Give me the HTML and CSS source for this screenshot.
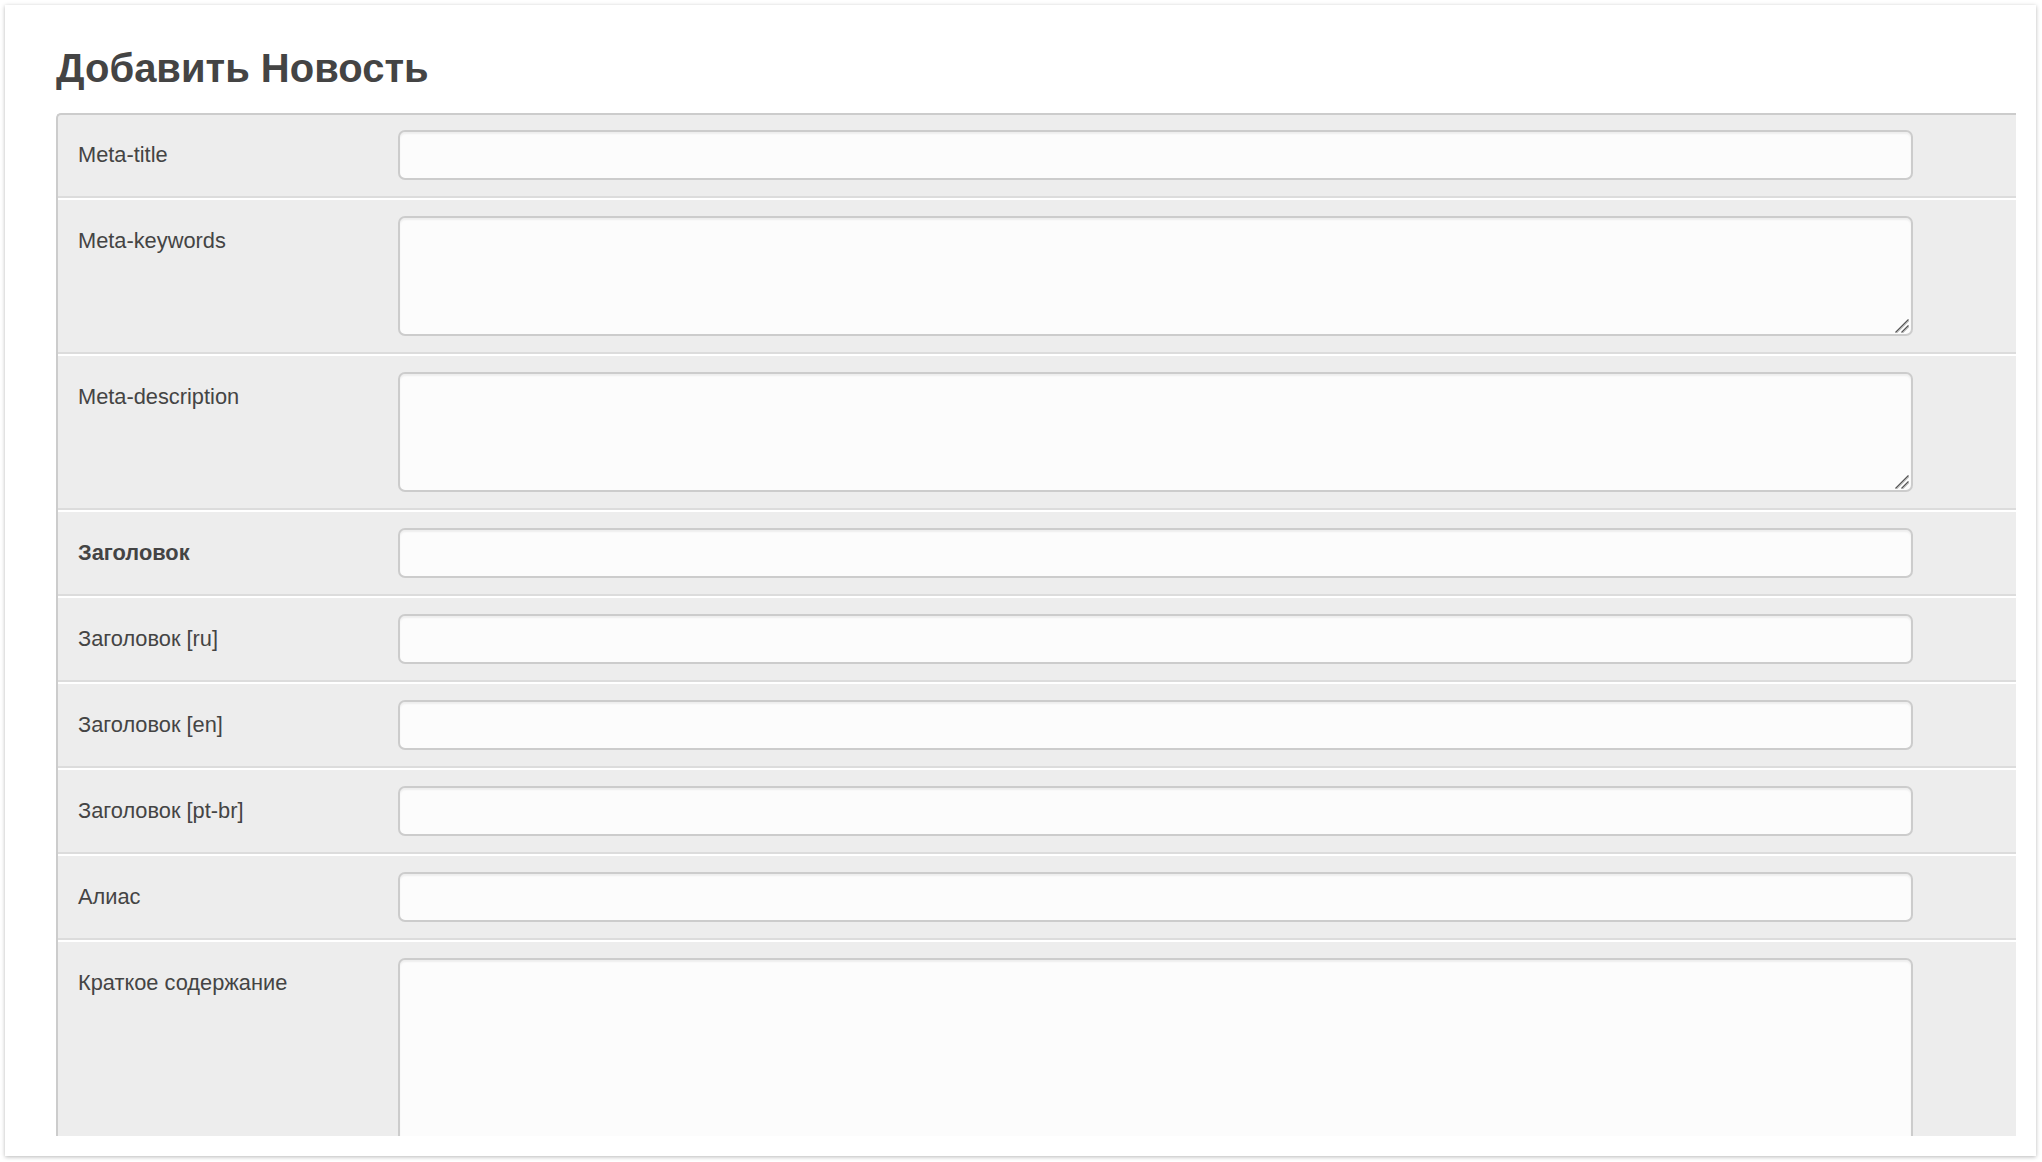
FILE: index.html
```html
<!DOCTYPE html>
<html lang="ru">
<head>
<meta charset="utf-8">
<title>Добавить Новость</title>
<link rel="stylesheet" href="styles.css">
</head>
<body>
<div class="card">
  <h1 class="page-title">Добавить Новость</h1>
  <div class="scroll">
    <div class="panel">
      <div class="row">
        <label class="label">Meta-title</label>
        <div class="control"><input class="field" type="text"></div>
      </div>
      <div class="row">
        <label class="label">Meta-keywords</label>
        <div class="control">
          <textarea class="field area"></textarea>
          <svg class="grip" width="16" height="16" viewBox="0 0 16 16"><path d="M14.5 1.5 L1.5 14.5 M14.5 7.5 L7.5 14.5" stroke="#555" stroke-width="1.4" fill="none"/><path d="M15 3 L3 15 M15 9 L9 15" stroke="#bbb" stroke-width="0.8" fill="none"/></svg>
        </div>
      </div>
      <div class="row">
        <label class="label">Meta-description</label>
        <div class="control">
          <textarea class="field area"></textarea>
          <svg class="grip" width="16" height="16" viewBox="0 0 16 16"><path d="M14.5 1.5 L1.5 14.5 M14.5 7.5 L7.5 14.5" stroke="#555" stroke-width="1.4" fill="none"/><path d="M15 3 L3 15 M15 9 L9 15" stroke="#bbb" stroke-width="0.8" fill="none"/></svg>
        </div>
      </div>
      <div class="row">
        <label class="label label-strong">Заголовок</label>
        <div class="control"><input class="field" type="text"></div>
      </div>
      <div class="row">
        <label class="label">Заголовок [ru]</label>
        <div class="control"><input class="field" type="text"></div>
      </div>
      <div class="row">
        <label class="label">Заголовок [en]</label>
        <div class="control"><input class="field" type="text"></div>
      </div>
      <div class="row">
        <label class="label">Заголовок [pt-br]</label>
        <div class="control"><input class="field" type="text"></div>
      </div>
      <div class="row">
        <label class="label">Алиас</label>
        <div class="control"><input class="field" type="text"></div>
      </div>
      <div class="row">
        <label class="label">Краткое содержание</label>
        <div class="control"><textarea class="field area area-big"></textarea></div>
      </div>
    </div>
  </div>
</div>
</body>
</html>
```
FILE: styles.css
```css
html, body {
  margin: 0;
  padding: 0;
  background: #ffffff;
}

body {
  font-family: "Liberation Sans", Arial, sans-serif;
  color: #444444;
}

.card {
  box-sizing: border-box;
  margin: 5px;
  width: 2031px;
  height: 1151px;
  padding: 40px 20px 20px 51px;
  background: #ffffff;
  box-shadow: 0 1px 4px rgba(0, 0, 0, 0.28);
  display: flex;
  flex-direction: column;
}

.page-title {
  margin: 0 0 22px 0;
  font-size: 40px;
  line-height: 46px;
  font-weight: bold;
  color: #444444;
}

.scroll {
  flex: 1;
  min-height: 0;
  overflow: hidden;
}

.panel {
  background: #ededed;
  border-top: 2px solid #cccccc;
  border-left: 2px solid #cccccc;
  border-top-left-radius: 5px;
}

.row {
  display: grid;
  grid-template-columns: 340px 1515px;
  align-items: start;
  padding: 16px 0 16px 0;
  border-bottom: 2px solid #dcdcdc;
}

.row + .row {
  border-top: 2px solid #ffffff;
}

.row:first-child {
  padding-top: 15px;
}

.label {
  padding: 8px 0 0 20px;
  font-size: 21.8px;
  line-height: 33px;
  color: #444444;
}

.label-strong {
  font-weight: bold;
}

.control {
  display: flex;
  position: relative;
}

.field {
  box-sizing: border-box;
  width: 1515px;
  height: 50px;
  margin: 0;
  padding: 6px 10px;
  border: 2px solid #cccccc;
  border-radius: 7px;
  background: #fcfcfc;
  box-shadow: inset 0 2px 2px rgba(0, 0, 0, 0.06);
  font-family: "Liberation Sans", Arial, sans-serif;
  font-size: 21.67px;
  color: #444444;
  outline: none;
}

.area {
  height: 120px;
  resize: none;
}

.area-big {
  height: 320px;
}

.grip {
  position: absolute;
  right: 3px;
  bottom: 2px;
  pointer-events: none;
}
```
